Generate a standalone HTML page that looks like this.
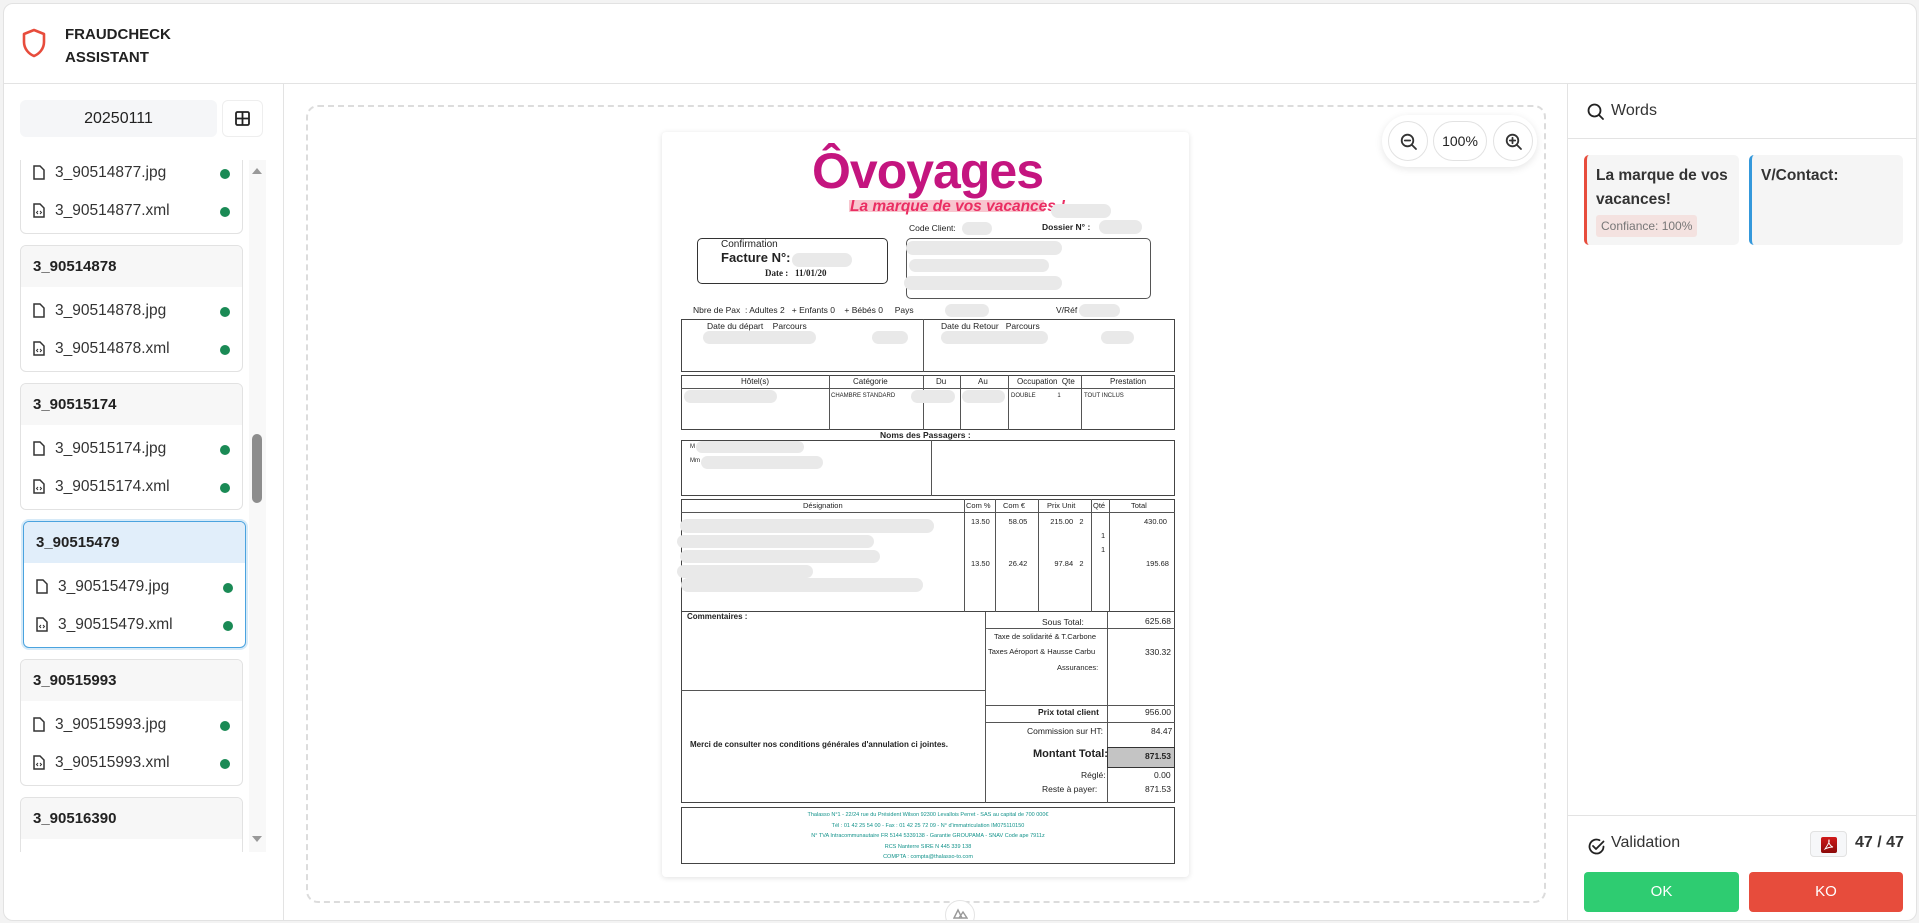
<!DOCTYPE html>
<html><head><meta charset="utf-8"><style>
*{box-sizing:border-box;margin:0;padding:0}
body{width:1919px;height:923px;background:#f3f3f3;font-family:"Liberation Sans",sans-serif;color:#222;position:relative;overflow:hidden}
.frame{position:absolute;left:3px;top:3px;width:1914px;height:918px;background:#fff;border:1px solid #e2e2e2;border-radius:10px;overflow:hidden}
.abs{position:absolute}
.hdr{left:0;top:0;width:1914px;height:80px;border-bottom:1px solid #e3e3e3}
.side{left:0;top:80px;width:280px;height:838px;border-right:1px solid #e3e3e3}
.card{position:absolute;left:16px;width:223px;height:127px;border:1px solid #e2e2e2;border-radius:6px;background:#fff;overflow:hidden}
.card .h{height:41px;background:#f7f7f7;font-weight:bold;font-size:15px;padding:12px 0 0 12px}
.it{position:absolute;left:12px;font-size:15.5px;color:#333}
.it svg{position:absolute;left:0;top:1px}
.it span{position:absolute;left:22px;top:0;white-space:nowrap}
.dot{position:absolute;left:199px;width:10px;height:10px;border-radius:50%;background:#1a8a55}
.d{position:absolute;font-family:"Liberation Sans",sans-serif;color:#222;white-space:nowrap}
.blob{position:absolute;background:#e9e9e9;border-radius:10px}
.b{position:absolute;border:1px solid #444}
.ln{position:absolute;background:#555}
</style></head><body>
<div class="frame">
 <div class="abs hdr">
  <svg class="abs" style="left:17px;top:24px" width="26" height="30" viewBox="0 0 26 30"><path d="M13 2 L23 6 V14 C23 21 18 26 13 28 C8 26 3 21 3 14 V6 Z" fill="none" stroke="#e74c3c" stroke-width="2.6" stroke-linejoin="round"/></svg>
  <div class="abs" style="left:61px;top:19px;font-weight:bold;font-size:15px;line-height:23px">FRAUDCHECK<br>ASSISTANT</div>
 </div>
 <div class="abs side">
  <div class="abs" style="left:16px;top:16px;width:197px;height:37px;background:#f5f6f8;border-radius:6px;text-align:center;font-size:16px;line-height:37px">20250111</div>
  <div class="abs" style="left:218px;top:16px;width:41px;height:37px;border:1px solid #eee;border-radius:6px"><svg class="abs" style="left:12px;top:10px" width="15" height="15" viewBox="0 0 15 15"><rect x="1" y="1" width="13" height="13" rx="1.5" fill="none" stroke="#222" stroke-width="1.8"/><path d="M7.5 1V14M1 7.5H14" stroke="#222" stroke-width="1.8"/></svg></div>
  <div class="abs" style="left:0;top:76px;width:264px;height:692px;overflow:hidden">
   <!-- cards at top offsets: card1 -53 -->
   <div class="card" style="top:-53px"><div class="h">3_90514877</div>
    <div class="it" style="top:56px"><svg width="12" height="15" viewBox="0 0 12 15"><path d="M1 1H7L11 5V14H1Z" fill="none" stroke="#333" stroke-width="1.5"/></svg><span>3_90514877.jpg</span></div><div class="dot" style="top:61px"></div>
    <div class="it" style="top:94px"><svg width="12" height="15" viewBox="0 0 12 15"><path d="M1 1H7L11 5V14H1Z" fill="none" stroke="#333" stroke-width="1.5"/><path d="M5 8L3.5 9.5L5 11M7 8L8.5 9.5L7 11" stroke="#333" stroke-width="1" fill="none"/></svg><span>3_90514877.xml</span></div><div class="dot" style="top:99px"></div></div>
   <div class="card" style="top:85px"><div class="h">3_90514878</div>
    <div class="it" style="top:56px"><svg width="12" height="15" viewBox="0 0 12 15"><path d="M1 1H7L11 5V14H1Z" fill="none" stroke="#333" stroke-width="1.5"/></svg><span>3_90514878.jpg</span></div><div class="dot" style="top:61px"></div>
    <div class="it" style="top:94px"><svg width="12" height="15" viewBox="0 0 12 15"><path d="M1 1H7L11 5V14H1Z" fill="none" stroke="#333" stroke-width="1.5"/><path d="M5 8L3.5 9.5L5 11M7 8L8.5 9.5L7 11" stroke="#333" stroke-width="1" fill="none"/></svg><span>3_90514878.xml</span></div><div class="dot" style="top:99px"></div></div>
   <div class="card" style="top:223px"><div class="h">3_90515174</div>
    <div class="it" style="top:56px"><svg width="12" height="15" viewBox="0 0 12 15"><path d="M1 1H7L11 5V14H1Z" fill="none" stroke="#333" stroke-width="1.5"/></svg><span>3_90515174.jpg</span></div><div class="dot" style="top:61px"></div>
    <div class="it" style="top:94px"><svg width="12" height="15" viewBox="0 0 12 15"><path d="M1 1H7L11 5V14H1Z" fill="none" stroke="#333" stroke-width="1.5"/><path d="M5 8L3.5 9.5L5 11M7 8L8.5 9.5L7 11" stroke="#333" stroke-width="1" fill="none"/></svg><span>3_90515174.xml</span></div><div class="dot" style="top:99px"></div></div>
   <div class="card" style="top:361px;left:19px;border:1.5px solid #4aa3df;box-shadow:0 0 0 2px #d6eaf8"><div class="h" style="background:#e1eefa">3_90515479</div>
    <div class="it" style="top:56px"><svg width="12" height="15" viewBox="0 0 12 15"><path d="M1 1H7L11 5V14H1Z" fill="none" stroke="#333" stroke-width="1.5"/></svg><span>3_90515479.jpg</span></div><div class="dot" style="top:61px"></div>
    <div class="it" style="top:94px"><svg width="12" height="15" viewBox="0 0 12 15"><path d="M1 1H7L11 5V14H1Z" fill="none" stroke="#333" stroke-width="1.5"/><path d="M5 8L3.5 9.5L5 11M7 8L8.5 9.5L7 11" stroke="#333" stroke-width="1" fill="none"/></svg><span>3_90515479.xml</span></div><div class="dot" style="top:99px"></div></div>
   <div class="card" style="top:499px"><div class="h">3_90515993</div>
    <div class="it" style="top:56px"><svg width="12" height="15" viewBox="0 0 12 15"><path d="M1 1H7L11 5V14H1Z" fill="none" stroke="#333" stroke-width="1.5"/></svg><span>3_90515993.jpg</span></div><div class="dot" style="top:61px"></div>
    <div class="it" style="top:94px"><svg width="12" height="15" viewBox="0 0 12 15"><path d="M1 1H7L11 5V14H1Z" fill="none" stroke="#333" stroke-width="1.5"/><path d="M5 8L3.5 9.5L5 11M7 8L8.5 9.5L7 11" stroke="#333" stroke-width="1" fill="none"/></svg><span>3_90515993.xml</span></div><div class="dot" style="top:99px"></div></div>
   <div class="card" style="top:637px"><div class="h">3_90516390</div></div>
   <div class="abs" style="left:245px;top:0;width:17px;height:692px;background:#f8f8f8"></div>
   <div class="abs" style="left:248px;top:8px;width:0;height:0;border-left:5px solid transparent;border-right:5px solid transparent;border-bottom:6px solid #999"></div>
   <div class="abs" style="left:248px;top:274px;width:10px;height:69px;background:#8d8d8d;border-radius:5px"></div>
   <div class="abs" style="left:248px;top:676px;width:0;height:0;border-left:5px solid transparent;border-right:5px solid transparent;border-top:6px solid #999"></div>
  </div>
 </div>
 <!-- viewer -->
 <div class="abs" style="left:302px;top:101px;width:1240px;height:798px;border:2px dashed #dcdcdc;border-radius:12px"></div>
 <div class="abs" style="left:941px;top:896px;width:30px;height:30px;border-radius:50%;background:#fff;border:1px solid #e4e4e4"><svg class="abs" style="left:7px;top:7px" width="15" height="11" viewBox="0 0 15 11"><path d="M1 10L5 2L9 10ZM6 10L10 4L14 10Z" fill="none" stroke="#999" stroke-width="1.4"/></svg></div>
 <!-- document -->
 <div class="abs" style="left:658px;top:128px;width:527px;height:745px;background:#fff;box-shadow:0 1px 6px rgba(0,0,0,.12);border-radius:4px">
 </div>
 <div class="d" style="left:808px;top:138px;font-size:50px;font-weight:bold;color:#c4157f;letter-spacing:-1px">Ôvoyages</div>
 <div class="abs" style="left:845px;top:196px;width:195px;height:12px;background:#f8c6cf"></div>
 <div class="d" style="left:846px;top:194px;font-size:15.5px;font-weight:bold;font-style:italic;color:#ea2e63">La marque de vos vacances !</div>
 <div class="blob" style="left:1047px;top:200px;width:60px;height:14px"></div>
 <div class="d" style="left:905px;top:219px;font-size:8.5px">Code Client:</div><div class="blob" style="left:958px;top:218px;width:30px;height:13px"></div>
 <div class="d" style="left:1038px;top:218px;font-size:8.5px;font-weight:bold">Dossier  N° :</div><div class="blob" style="left:1095px;top:216px;width:43px;height:14px"></div>
 <div class="abs" style="left:693px;top:234px;width:191px;height:46px;border:1.5px solid #333;border-radius:5px"></div>
 <div class="d" style="left:717px;top:235px;font-size:10px">Confirmation</div>
 <div class="d" style="left:717px;top:246px;font-size:13px;font-weight:bold">Facture N°:</div><div class="blob" style="left:788px;top:249px;width:60px;height:14px"></div>
 <div class="d" style="left:761px;top:264px;font-size:9px;font-weight:bold;font-family:'Liberation Serif',serif">Date :&nbsp;&nbsp; 11/01/20</div>
 <div class="abs" style="left:902px;top:234px;width:245px;height:61px;border:1px solid #555;border-radius:5px"></div>
 <div class="blob" style="left:902px;top:237px;width:156px;height:14px"></div><div class="blob" style="left:905px;top:255px;width:140px;height:13px"></div><div class="blob" style="left:900px;top:272px;width:158px;height:14px"></div>
 <div class="d" style="left:689px;top:301px;font-size:8.5px">Nbre de Pax &nbsp;: Adultes 2 &nbsp;&nbsp;+ Enfants 0 &nbsp;&nbsp;&nbsp;+ Bébés 0 &nbsp;&nbsp;&nbsp;&nbsp;Pays</div><div class="blob" style="left:941px;top:300px;width:44px;height:13px"></div>
 <div class="d" style="left:1052px;top:301px;font-size:8.5px">V/Réf</div><div class="blob" style="left:1075px;top:300px;width:41px;height:13px"></div>
 <div class="b" style="left:677px;top:315px;width:494px;height:53px"></div><div class="ln" style="left:919px;top:315px;width:1px;height:53px"></div>
 <div class="d" style="left:703px;top:317px;font-size:8.5px">Date du départ &nbsp;&nbsp;&nbsp;Parcours</div>
 <div class="d" style="left:937px;top:317px;font-size:8.5px">Date du Retour &nbsp;&nbsp;Parcours</div>
 <div class="blob" style="left:699px;top:327px;width:113px;height:13px"></div><div class="blob" style="left:868px;top:327px;width:36px;height:13px"></div><div class="blob" style="left:937px;top:327px;width:107px;height:13px"></div><div class="blob" style="left:1097px;top:327px;width:33px;height:13px"></div>
 <div class="b" style="left:677px;top:371px;width:494px;height:55px"></div><div class="ln" style="left:677px;top:384px;width:494px;height:1px"></div>
 <div class="ln" style="left:825px;top:371px;width:1px;height:55px"></div><div class="ln" style="left:919px;top:371px;width:1px;height:55px"></div><div class="ln" style="left:956px;top:371px;width:1px;height:55px"></div><div class="ln" style="left:1004px;top:371px;width:1px;height:55px"></div><div class="ln" style="left:1077px;top:371px;width:1px;height:55px"></div>
 <div class="d" style="left:737px;top:373px;font-size:8px">Hôtel(s)</div><div class="d" style="left:849px;top:373px;font-size:8px">Catégorie</div><div class="d" style="left:932px;top:373px;font-size:8px">Du</div><div class="d" style="left:974px;top:373px;font-size:8px">Au</div><div class="d" style="left:1013px;top:373px;font-size:8px">Occupation &nbsp;Qte</div><div class="d" style="left:1106px;top:373px;font-size:8px">Prestation</div>
 <div class="blob" style="left:680px;top:386px;width:93px;height:13px"></div><div class="d" style="left:827px;top:389px;font-size:6px">CHAMBRE STANDARD</div><div class="blob" style="left:907px;top:386px;width:44px;height:13px"></div><div class="blob" style="left:958px;top:386px;width:43px;height:13px"></div>
 <div class="d" style="left:1007px;top:389px;font-size:6px">DOUBLE &nbsp;&nbsp;&nbsp;&nbsp;&nbsp;&nbsp;&nbsp;&nbsp;&nbsp;&nbsp;&nbsp;&nbsp;1</div><div class="d" style="left:1080px;top:389px;font-size:6px">TOUT INCLUS</div>
 <div class="d" style="left:876px;top:426px;font-size:8.5px;font-weight:bold">Noms des Passagers :</div>
 <div class="b" style="left:677px;top:436px;width:494px;height:56px"></div><div class="ln" style="left:927px;top:436px;width:1px;height:56px"></div>
 <div class="d" style="left:686px;top:440px;font-size:6px">M</div><div class="blob" style="left:692px;top:437px;width:108px;height:12px"></div>
 <div class="d" style="left:686px;top:454px;font-size:6px">Mm</div><div class="blob" style="left:697px;top:452px;width:122px;height:13px"></div>
 <div class="b" style="left:677px;top:495px;width:494px;height:113px"></div><div class="ln" style="left:677px;top:508px;width:494px;height:1px"></div>
 <div class="ln" style="left:960px;top:495px;width:1px;height:113px"></div><div class="ln" style="left:991px;top:495px;width:1px;height:113px"></div><div class="ln" style="left:1034px;top:495px;width:1px;height:113px"></div><div class="ln" style="left:1087px;top:495px;width:1px;height:113px"></div><div class="ln" style="left:1105px;top:495px;width:1px;height:113px"></div>
 <div class="d" style="left:799px;top:497px;font-size:7.5px">Désignation</div><div class="d" style="left:962px;top:497px;font-size:7.5px">Com %</div><div class="d" style="left:999px;top:497px;font-size:7.5px">Com €</div><div class="d" style="left:1043px;top:497px;font-size:7.5px">Prix Unit</div><div class="d" style="left:1089px;top:497px;font-size:7.5px">Qté</div><div class="d" style="left:1127px;top:497px;font-size:7.5px">Total</div>
 <div class="blob" style="left:676px;top:515px;width:254px;height:14px"></div><div class="blob" style="left:673px;top:531px;width:197px;height:13px"></div><div class="blob" style="left:676px;top:546px;width:200px;height:13px"></div><div class="blob" style="left:673px;top:561px;width:136px;height:13px"></div><div class="blob" style="left:677px;top:574px;width:242px;height:14px"></div>
 <div class="d" style="left:967px;top:513px;font-size:7.5px">13.50 &nbsp;&nbsp;&nbsp;&nbsp;&nbsp;&nbsp;&nbsp;&nbsp;58.05 &nbsp;&nbsp;&nbsp;&nbsp;&nbsp;&nbsp;&nbsp;&nbsp;&nbsp;&nbsp;215.00 &nbsp;&nbsp;2</div><div class="d" style="left:1140px;top:513px;font-size:7.5px">430.00</div>
 <div class="d" style="left:1097px;top:527px;font-size:7.5px">1</div><div class="d" style="left:1097px;top:541px;font-size:7.5px">1</div>
 <div class="d" style="left:967px;top:555px;font-size:7.5px">13.50 &nbsp;&nbsp;&nbsp;&nbsp;&nbsp;&nbsp;&nbsp;&nbsp;26.42 &nbsp;&nbsp;&nbsp;&nbsp;&nbsp;&nbsp;&nbsp;&nbsp;&nbsp;&nbsp;&nbsp;&nbsp;97.84 &nbsp;&nbsp;2</div><div class="d" style="left:1142px;top:555px;font-size:7.5px">195.68</div>
 <div class="b" style="left:677px;top:608px;width:494px;height:191px;border-top:none"></div>
 <div class="ln" style="left:677px;top:686px;width:305px;height:1px"></div><div class="ln" style="left:981px;top:608px;width:1px;height:191px"></div><div class="ln" style="left:1103px;top:608px;width:1px;height:191px"></div>
 <div class="ln" style="left:981px;top:624px;width:190px;height:1px"></div><div class="ln" style="left:981px;top:701px;width:190px;height:1px"></div><div class="ln" style="left:981px;top:718px;width:190px;height:1px"></div>
 <div class="d" style="left:683px;top:608px;font-size:8px;font-weight:bold">Commentaires :</div>
 <div class="d" style="left:1038px;top:613px;font-size:8.5px">Sous Total:</div><div class="d" style="left:1141px;top:612px;font-size:8.5px">625.68</div>
 <div class="d" style="left:990px;top:628px;font-size:7.5px">Taxe de solidarité &amp; T.Carbone</div>
 <div class="d" style="left:984px;top:643px;font-size:7.5px">Taxes Aéroport &amp; Hausse Carbu</div><div class="d" style="left:1141px;top:643px;font-size:8.5px">330.32</div>
 <div class="d" style="left:1053px;top:659px;font-size:7.5px">Assurances:</div>
 <div class="d" style="left:1034px;top:703px;font-size:8.5px;font-weight:bold">Prix total client</div><div class="d" style="left:1141px;top:703px;font-size:8.5px">956.00</div>
 <div class="d" style="left:1023px;top:722px;font-size:8.5px">Commission sur HT:</div><div class="d" style="left:1147px;top:722px;font-size:8.5px">84.47</div>
 <div class="abs" style="left:1103px;top:743px;width:68px;height:21px;background:#c4c4c4;border:1px solid #333"></div>
 <div class="d" style="left:1029px;top:744px;font-size:11px;font-weight:bold">Montant Total:</div><div class="d" style="left:1141px;top:747px;font-size:8.5px;font-weight:bold">871.53</div>
 <div class="d" style="left:1077px;top:766px;font-size:8.5px">Réglé:</div><div class="d" style="left:1150px;top:766px;font-size:8.5px">0.00</div>
 <div class="d" style="left:1038px;top:780px;font-size:8.5px">Reste à payer:</div><div class="d" style="left:1141px;top:780px;font-size:8.5px">871.53</div>
 <div class="d" style="left:686px;top:736px;font-size:8px;font-weight:bold">Merci de consulter nos conditions générales d'annulation ci jointes.</div>
 <div class="b" style="left:677px;top:803px;width:494px;height:57px"></div>
 <div style="position:absolute;left:677px;top:806px;width:494px;text-align:center;font-size:5.5px;line-height:10.6px;color:#12928a;font-family:'Liberation Sans',sans-serif">Thalasso N°1 - 22/24 rue du Président Wilson 92300 Levallois Perret - SAS au capital de 700 000€<br>Tél : 01 42 25 54 00 - Fax : 01 42 25 72 09 - N° d'immatriculation IM075110150<br>N° TVA Intracommunautaire FR 5144 5339138 - Garantie GROUPAMA - SNAV Code ape 7911z<br>RCS Nanterre SIRE N 445 339 138<br>COMPTA : compta@thalasso-to.com</div>
 <!-- zoom controls -->
 <div class="abs" style="left:1378px;top:111px;width:155px;height:52px;background:#fff;border-radius:26px;box-shadow:0 2px 8px rgba(0,0,0,.1)"></div>
 <div class="abs" style="left:1384px;top:117px;width:40px;height:40px;border:1px solid #e2e2e2;border-radius:50%"><svg class="abs" style="left:11px;top:11px" width="18" height="18" viewBox="0 0 18 18"><circle cx="7.5" cy="7.5" r="5.8" fill="none" stroke="#333" stroke-width="1.8"/><path d="M4.8 7.5H10.2M12 12L16 16" stroke="#333" stroke-width="1.8" stroke-linecap="round"/></svg></div>
 <div class="abs" style="left:1429px;top:117px;width:54px;height:40px;border:1px solid #e2e2e2;border-radius:20px;text-align:center;line-height:38px;font-size:14px">100%</div>
 <div class="abs" style="left:1489px;top:117px;width:40px;height:40px;border:1px solid #e2e2e2;border-radius:50%"><svg class="abs" style="left:11px;top:11px" width="18" height="18" viewBox="0 0 18 18"><circle cx="7.5" cy="7.5" r="5.8" fill="none" stroke="#333" stroke-width="1.8"/><path d="M4.8 7.5H10.2M7.5 4.8V10.2M12 12L16 16" stroke="#333" stroke-width="1.8" stroke-linecap="round"/></svg></div>
 <!-- right panel -->
 <div class="abs" style="left:1563px;top:80px;width:351px;height:838px;border-left:1px solid #e3e3e3">
  <div class="abs" style="left:0;top:0;width:351px;height:55px;border-bottom:1px solid #e3e3e3">
   <svg class="abs" style="left:19px;top:19px" width="18" height="18" viewBox="0 0 18 18"><circle cx="7.5" cy="7.5" r="6" fill="none" stroke="#222" stroke-width="1.8"/><path d="M12 12L16 16" stroke="#222" stroke-width="1.8" stroke-linecap="round"/></svg>
   <div class="abs" style="left:43px;top:18px;font-size:16px;color:#333">Words</div>
  </div>
  <div class="abs" style="left:16px;top:71px;width:155px;height:90px;background:#f5f5f5;border-radius:5px;border-left:3px solid #e74c3c">
   <div class="abs" style="left:9px;top:9px;font-size:15.5px;font-weight:bold;line-height:24px;color:#333">La marque de vos<br>vacances!</div>
   <div class="abs" style="left:9px;top:60px;padding:0 5px;height:22px;line-height:22px;background:#f4e2e0;border-radius:3px;font-size:12px;color:#777">Confiance: 100%</div>
  </div>
  <div class="abs" style="left:181px;top:71px;width:154px;height:90px;background:#f5f5f5;border-radius:5px;border-left:3px solid #3498db">
   <div class="abs" style="left:9px;top:9px;font-size:15.5px;font-weight:bold;line-height:24px;color:#333">V/Contact:</div>
  </div>
  <div class="abs" style="left:0;top:731px;width:351px;height:1px;background:#e3e3e3"></div>
  <svg class="abs" style="left:19px;top:753px" width="19" height="19" viewBox="0 0 19 19"><path d="M16.5 9.5A7 7 0 1 1 12.5 3.2" fill="none" stroke="#222" stroke-width="1.8" stroke-linecap="round"/><path d="M6 9L9 12L16.5 4.5" fill="none" stroke="#222" stroke-width="1.8" stroke-linecap="round" stroke-linejoin="round"/></svg>
  <div class="abs" style="left:43px;top:750px;font-size:16px;color:#333">Validation</div>
  <div class="abs" style="left:242px;top:747px;width:37px;height:26px;background:#f6f7f9;border:1px solid #e2e2e2;border-radius:4px"><div class="abs" style="left:10px;top:5px;width:16px;height:16px;background:linear-gradient(#d01a1a,#8b0a0a);border-radius:2px"><svg width="16" height="16" viewBox="0 0 16 16"><path d="M4 12C6 9 9 5 8 3C7 5 9 9 12 10C9 10 6 11 4 12Z" fill="none" stroke="#fff" stroke-width=".9"/></svg></div></div>
  <div class="abs" style="left:287px;top:750px;font-size:16px;font-weight:bold;color:#333">47 / 47</div>
  <div class="abs" style="left:16px;top:788px;width:155px;height:40px;background:#2ecc71;border-radius:4px;color:#fff;text-align:center;line-height:40px;font-size:15px">OK</div>
  <div class="abs" style="left:181px;top:788px;width:154px;height:40px;background:#e74c3c;border-radius:4px;color:#fff;text-align:center;line-height:40px;font-size:15px">KO</div>
 </div>
</div>
</body></html>
